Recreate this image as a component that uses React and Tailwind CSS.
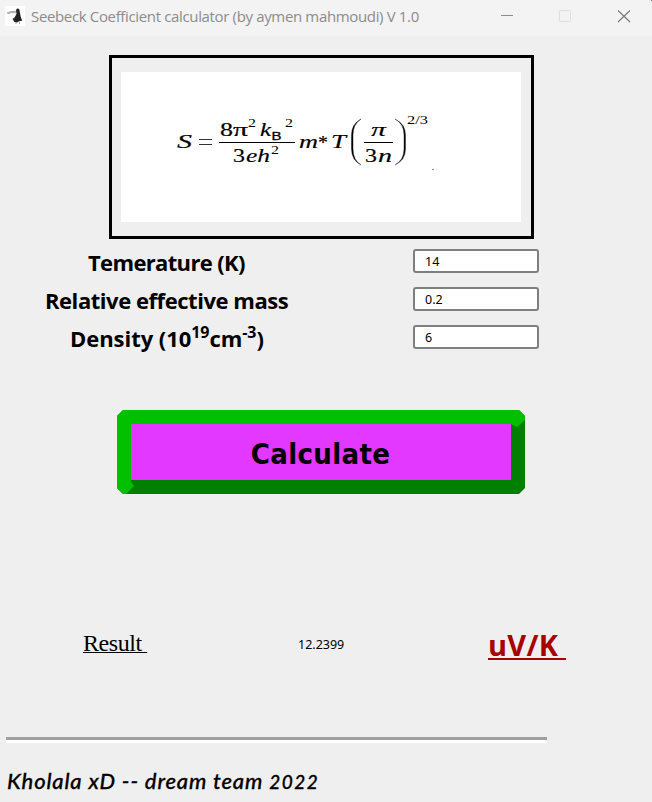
import React from "react";

function TitleBar() {
  return (
    <header className="flex h-[36px] items-center bg-[#f3f3f3] pl-[5px] text-[#8c8c8c]">
      <svg width="20" height="20" viewBox="0 0 20 20" className="mb-[4px] shrink-0">
        <rect width="20" height="20" fill="#fff" />
        <path d="M2.2 7 L5.5 5.6 L11.5 5.2 L11.5 6.8 L6.5 6.6 L3 7.6 Z" fill="#e4e4e4" stroke="#777" strokeWidth=".6" />
        <path d="M11 4 Q12.5 1.6 14.3 3.2 L14.9 6.5 L15.8 11 L17.2 14.8 L14.5 15 L12 16.5 L9 15.7 L8 13.5 L10.2 10.5 L11.6 7.5 Z" fill="#222" />
        <path d="M7.2 13 L9.5 11.5 L9 14 Z" fill="#444" />
        <path d="M11 16 V18 M14.5 15.5 V18" stroke="#aaa" strokeWidth="1" />
      </svg>
      <h1 className="mb-[5px] ml-[6px] w-[440px] whitespace-nowrap font-['Open_Sans',sans-serif] text-[15px] leading-[20px] tracking-[-0.35px]">
        Seebeck Coefficient calculator (by aymen mahmoudi) V 1.0
      </h1>
      <svg width="181" height="36" viewBox="471 0 181 36" fill="none" className="shrink-0">
        <path d="M501 15.5H513" stroke="#8c8c8c" />
        <rect x="559.5" y="10.5" width="11" height="11" rx="1" stroke="#dedede" />
        <path d="M618 10.5L630 22M630 10.5L618 22" stroke="#777" strokeWidth="1.1" />
        <path d="M651 0H652V1H651Z" fill="#777" />
      </svg>
    </header>
  );
}

function Formula() {
  return (
    <svg
      width="400"
      height="150"
      viewBox="121 72 400 150"
      className="bg-white font-['Liberation_Serif',serif]"
      fill="#000"
      stroke="none"
    >
      <g fontStyle="italic" fontSize="19" stroke="#000" strokeWidth=".15">
        <text x="177" y="148" textLength="15" lengthAdjust="spacingAndGlyphs">S</text>
        <text x="260" y="136" textLength="11" lengthAdjust="spacingAndGlyphs">k</text>
        <text x="246" y="162" textLength="24" lengthAdjust="spacingAndGlyphs">eh</text>
        <text x="299" y="148" textLength="19" lengthAdjust="spacingAndGlyphs">m</text>
        <text x="331" y="148" textLength="15" lengthAdjust="spacingAndGlyphs">T</text>
        <text x="371" y="136" textLength="15" lengthAdjust="spacingAndGlyphs">π</text>
        <text x="378" y="162" textLength="14" lengthAdjust="spacingAndGlyphs">n</text>
      </g>
      <g fontSize="19" stroke="#000" strokeWidth=".2">
        <text x="220" y="136" textLength="13" lengthAdjust="spacingAndGlyphs">8</text>
        <text x="233" y="136" textLength="15" lengthAdjust="spacingAndGlyphs">π</text>
        <text x="233" y="162" textLength="12" lengthAdjust="spacingAndGlyphs">3</text>
        <text x="365" y="162" textLength="12" lengthAdjust="spacingAndGlyphs">3</text>
        <text x="318" y="149" textLength="10" lengthAdjust="spacingAndGlyphs">*</text>
      </g>
      <g fontSize="12">
        <text x="248" y="127" textLength="8" lengthAdjust="spacingAndGlyphs">2</text>
        <text x="285" y="126.5" textLength="8" lengthAdjust="spacingAndGlyphs">2</text>
        <text x="271" y="154" textLength="8" lengthAdjust="spacingAndGlyphs">2</text>
        <text x="407" y="124" textLength="21" lengthAdjust="spacingAndGlyphs">2/3</text>
        <text
          x="271.5"
          y="140"
          fontSize="11"
          textLength="10"
          lengthAdjust="spacingAndGlyphs"
          className="font-['Liberation_Sans',sans-serif]"
          stroke="#000"
          strokeWidth=".3"
        >
          B
        </text>
      </g>
      <path d="M199 139.5H212M199 144.5H212" stroke="#333" />
      <path d="M219 142.5H295M364 142.5H393" stroke="#000" />
      <path d="M361 119Q351.5 124 351.5 135V149Q351.5 160 361 165Q353 160 353 149V135Q353 124 361 119Z" stroke="#000" strokeWidth=".4" />
      <path d="M395 119Q405.5 124 405.5 135V149Q405.5 160 395 165Q404 160 404 149V135Q404 124 395 119Z" stroke="#222" strokeWidth=".4" />
      <path d="M432 169.5H434" stroke="#888" />
    </svg>
  );
}

function Field({ value }) {
  return (
    <input
      readOnly
      value={value}
      className="block h-[24px] w-[126px] rounded-[3px] border-2 border-[#7f7f7f] bg-white pl-[10px] font-['Noto_Sans',sans-serif] text-[12.5px] leading-[20px] text-black outline-none"
    />
  );
}

export default function App() {
  return (
    <div className="h-[802px] w-[652px] overflow-hidden bg-[#efefef] text-black">
      <TitleBar />
      <main className="flex flex-col">
        <div className="mt-[19px] ml-[109px] h-[184px] w-[425px] border-3 border-black pt-[14px] pl-[9px]">
          <Formula />
        </div>

        <div className="mt-[10px] flex h-[100px]">
          <div className="ml-[7px] flex w-[406px] flex-col gap-[14px] whitespace-nowrap font-['Open_Sans',sans-serif] text-[22px] leading-[24px] font-bold">
            <div className="flex h-[24px] items-center pt-[2px] pl-[81px]">
              <span className="tracking-[-0.65px]">Temerature (K)</span>
            </div>
            <div className="flex h-[24px] items-center pt-[2px] pl-[38px]">
              <span className="tracking-[-0.45px]">Relative effective mass</span>
            </div>
            <div className="flex h-[24px] items-center pt-[2px] pl-[63px]">
              <span className="tracking-[-0.05px]">
                Density (10<sup className="top-[-9px] text-[16px] leading-[0]">19</sup>cm
                <sup className="top-[-9px] text-[16px] leading-[0]">-3</sup>)
              </span>
            </div>
          </div>
          <div className="flex flex-col gap-[14px]">
            <Field value="14" />
            <Field value="0.2" />
            <Field value="6" />
          </div>
        </div>

        <button className="mt-[61px] ml-[117px] grid h-[84px] w-[408px]">
          <svg width="408" height="84" className="col-start-1 row-start-1">
            <path d="M6 0H402L408 6V78L402 84H6L0 78V6Z" fill="#008000" />
            <path d="M6 0H402L408 6V10L400 17L394 14H14V72L17 76L9 84H6L0 78V6Z" fill="#00c000" />
            <rect x="14" y="14" width="380" height="56" fill="#e238ff" />
          </svg>
          <span className="col-start-1 row-start-1 self-center justify-self-center pr-[1px] pt-[3px] font-['DejaVu_Sans_Condensed','DejaVu_Sans',sans-serif] text-[29px] leading-[34px] font-bold tracking-[0.35px] [font-stretch:condensed]">
            Calculate
          </span>
        </button>

        <div className="mt-[130px] flex h-[40px] items-center">
          <div className="w-[215px] pl-[83px]">
            <span className="font-['Liberation_Serif',serif] text-[24px] leading-[24px] tracking-[-0.45px] whitespace-pre underline decoration-1 underline-offset-[1px] [text-decoration-skip-ink:none]">
              {"Result "}
            </span>
          </div>
          <output className="ml-[83px] w-[190px] pt-[2px] font-['Noto_Sans',sans-serif] text-[12.5px] leading-[18px]">12.2399</output>
          <div className="pt-px font-['Open_Sans',sans-serif] text-[29px] leading-[32px] font-bold tracking-[0.25px] whitespace-pre text-[#a80000] underline decoration-2 underline-offset-[2px] [text-decoration-skip-ink:none]">
            {"uV/K "}
          </div>
        </div>

        <div className="mt-[73px] ml-[6px] h-[6px] w-[541px] border-t-3 border-b-3 border-t-[#a0a0a0] border-b-white" />
        <footer className="mt-[24px] ml-[7px] whitespace-nowrap font-['Lato',sans-serif] text-[22px] leading-[28px] font-medium tracking-[0.85px] italic [-webkit-text-stroke:0.3px_black]">
          Kholala xD -- dream team <span className="text-[19px] tracking-[1.5px]">2022</span>
        </footer>
      </main>
    </div>
  );
}
